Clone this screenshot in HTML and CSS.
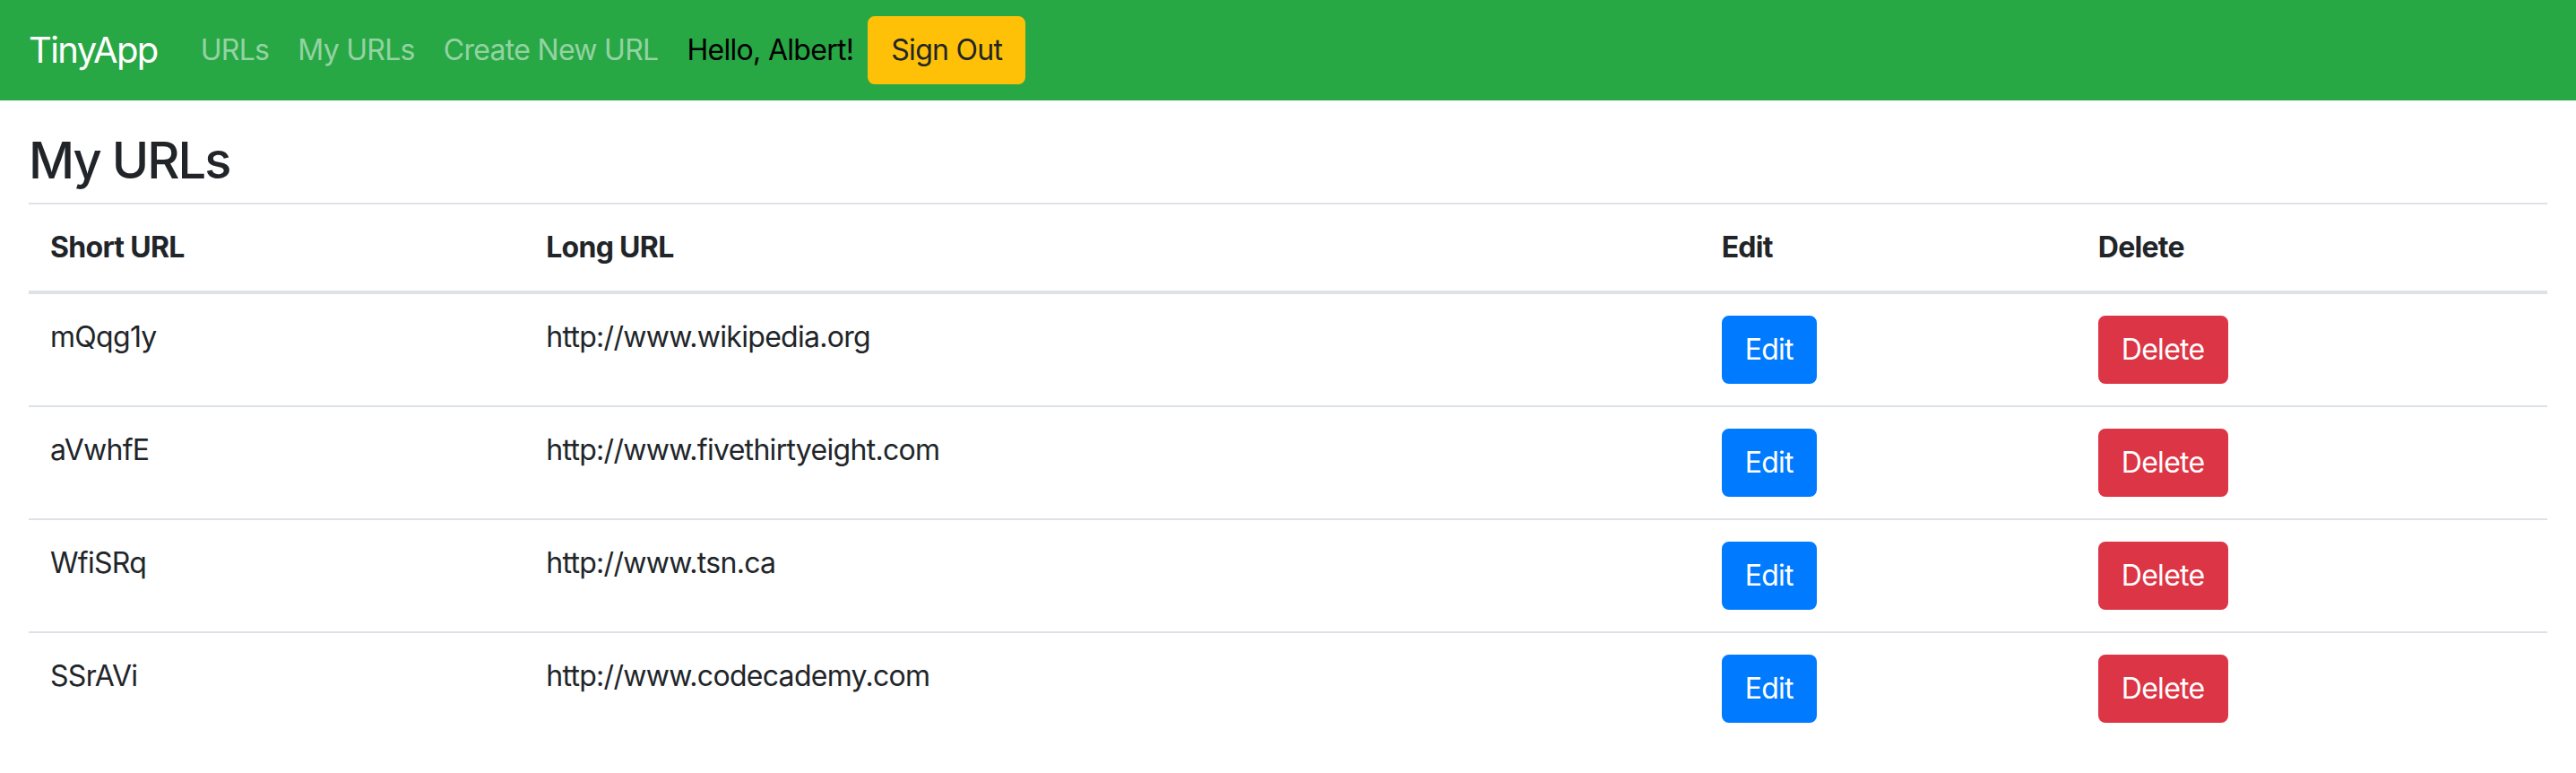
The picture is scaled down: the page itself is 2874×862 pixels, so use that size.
FILE: index.html
```html
<!DOCTYPE html>
<html lang="en">
<head>
<meta charset="utf-8">
<title>TinyApp</title>
<link rel="stylesheet" href="styles.css">
</head>
<body>
<nav class="navbar">
  <a class="brand" href="#">TinyApp</a>
  <a class="nav-link" href="#">URLs</a>
  <a class="nav-link" href="#">My URLs</a>
  <a class="nav-link" href="#">Create New URL</a>
  <span class="greeting">Hello, Albert!</span>
  <button class="btn btn-warning">Sign Out</button>
</nav>
<main class="container">
  <h3 class="title">My URLs</h3>
  <table class="table">
    <colgroup>
      <col class="c-short">
      <col class="c-long">
      <col class="c-edit">
      <col class="c-delete">
    </colgroup>
    <thead>
      <tr><th>Short URL</th><th>Long URL</th><th>Edit</th><th>Delete</th></tr>
    </thead>
    <tbody>
      <tr><td>mQqg1y</td><td>http://www.wikipedia.org</td><td><button class="btn btn-primary">Edit</button></td><td><button class="btn btn-danger">Delete</button></td></tr>
      <tr><td>aVwhfE</td><td>http://www.fivethirtyeight.com</td><td><button class="btn btn-primary">Edit</button></td><td><button class="btn btn-danger">Delete</button></td></tr>
      <tr><td>WfiSRq</td><td>http://www.tsn.ca</td><td><button class="btn btn-primary">Edit</button></td><td><button class="btn btn-danger">Delete</button></td></tr>
      <tr><td>SSrAVi</td><td>http://www.codecademy.com</td><td><button class="btn btn-primary">Edit</button></td><td><button class="btn btn-danger">Delete</button></td></tr>
    </tbody>
  </table>
</main>
</body>
</html>
```

FILE: styles.css
```css
* { box-sizing: border-box; }
html, body { margin: 0; padding: 0; }
body {
  font-family: "Inter", "Roboto", "Liberation Sans", sans-serif;
  font-size: 32px;
  line-height: 1.5;
  letter-spacing: -0.022em;
  color: #212529;
  background: #fff;
}
a { text-decoration: none; }

.navbar {
  display: flex;
  align-items: center;
  height: 112px;
  padding: 16px 32px;
  background: #28a745;
}
.brand {
  font-size: 40px;
  line-height: 60px;
  padding: 10px 0;
  margin-right: 32px;
  letter-spacing: -0.04em;
  color: #fff;
}
.nav-link {
  padding: 16px;
  line-height: 48px;
  color: rgba(255, 255, 255, 0.5);
}
.greeting {
  padding: 16px;
  line-height: 48px;
  color: #000;
}

.btn {
  font-family: inherit;
  font-size: 32px;
  line-height: 48px;
  letter-spacing: -0.022em;
  padding: 12px 24px;
  border: 2px solid transparent;
  border-radius: 8px;
  cursor: pointer;
}
.btn-warning { background: #ffc107; border-color: #ffc107; color: #212529; }
.btn-primary { background: #007bff; border-color: #007bff; color: #fff; }
.btn-danger { background: #dc3545; border-color: #dc3545; color: #fff; }

.container {
  padding: 0 32px;
}
.title {
  font-size: 56px;
  font-weight: 500;
  line-height: 1.2;
  letter-spacing: -0.035em;
  margin: 34px 0 13px;
}

.table {
  width: 100%;
  border-collapse: collapse;
  table-layout: fixed;
}
.c-short { width: 553px; }
.c-long { width: 1311px; }
.c-edit { width: 420px; }
.c-delete { width: 525px; }
.table th, .table td {
  padding: 24px;
  text-align: left;
  vertical-align: top;
  border-top: 2px solid #dee2e6;
}
.table th {
  font-weight: 700;
  vertical-align: bottom;
  border-bottom: 4px solid #dee2e6;
}
```
